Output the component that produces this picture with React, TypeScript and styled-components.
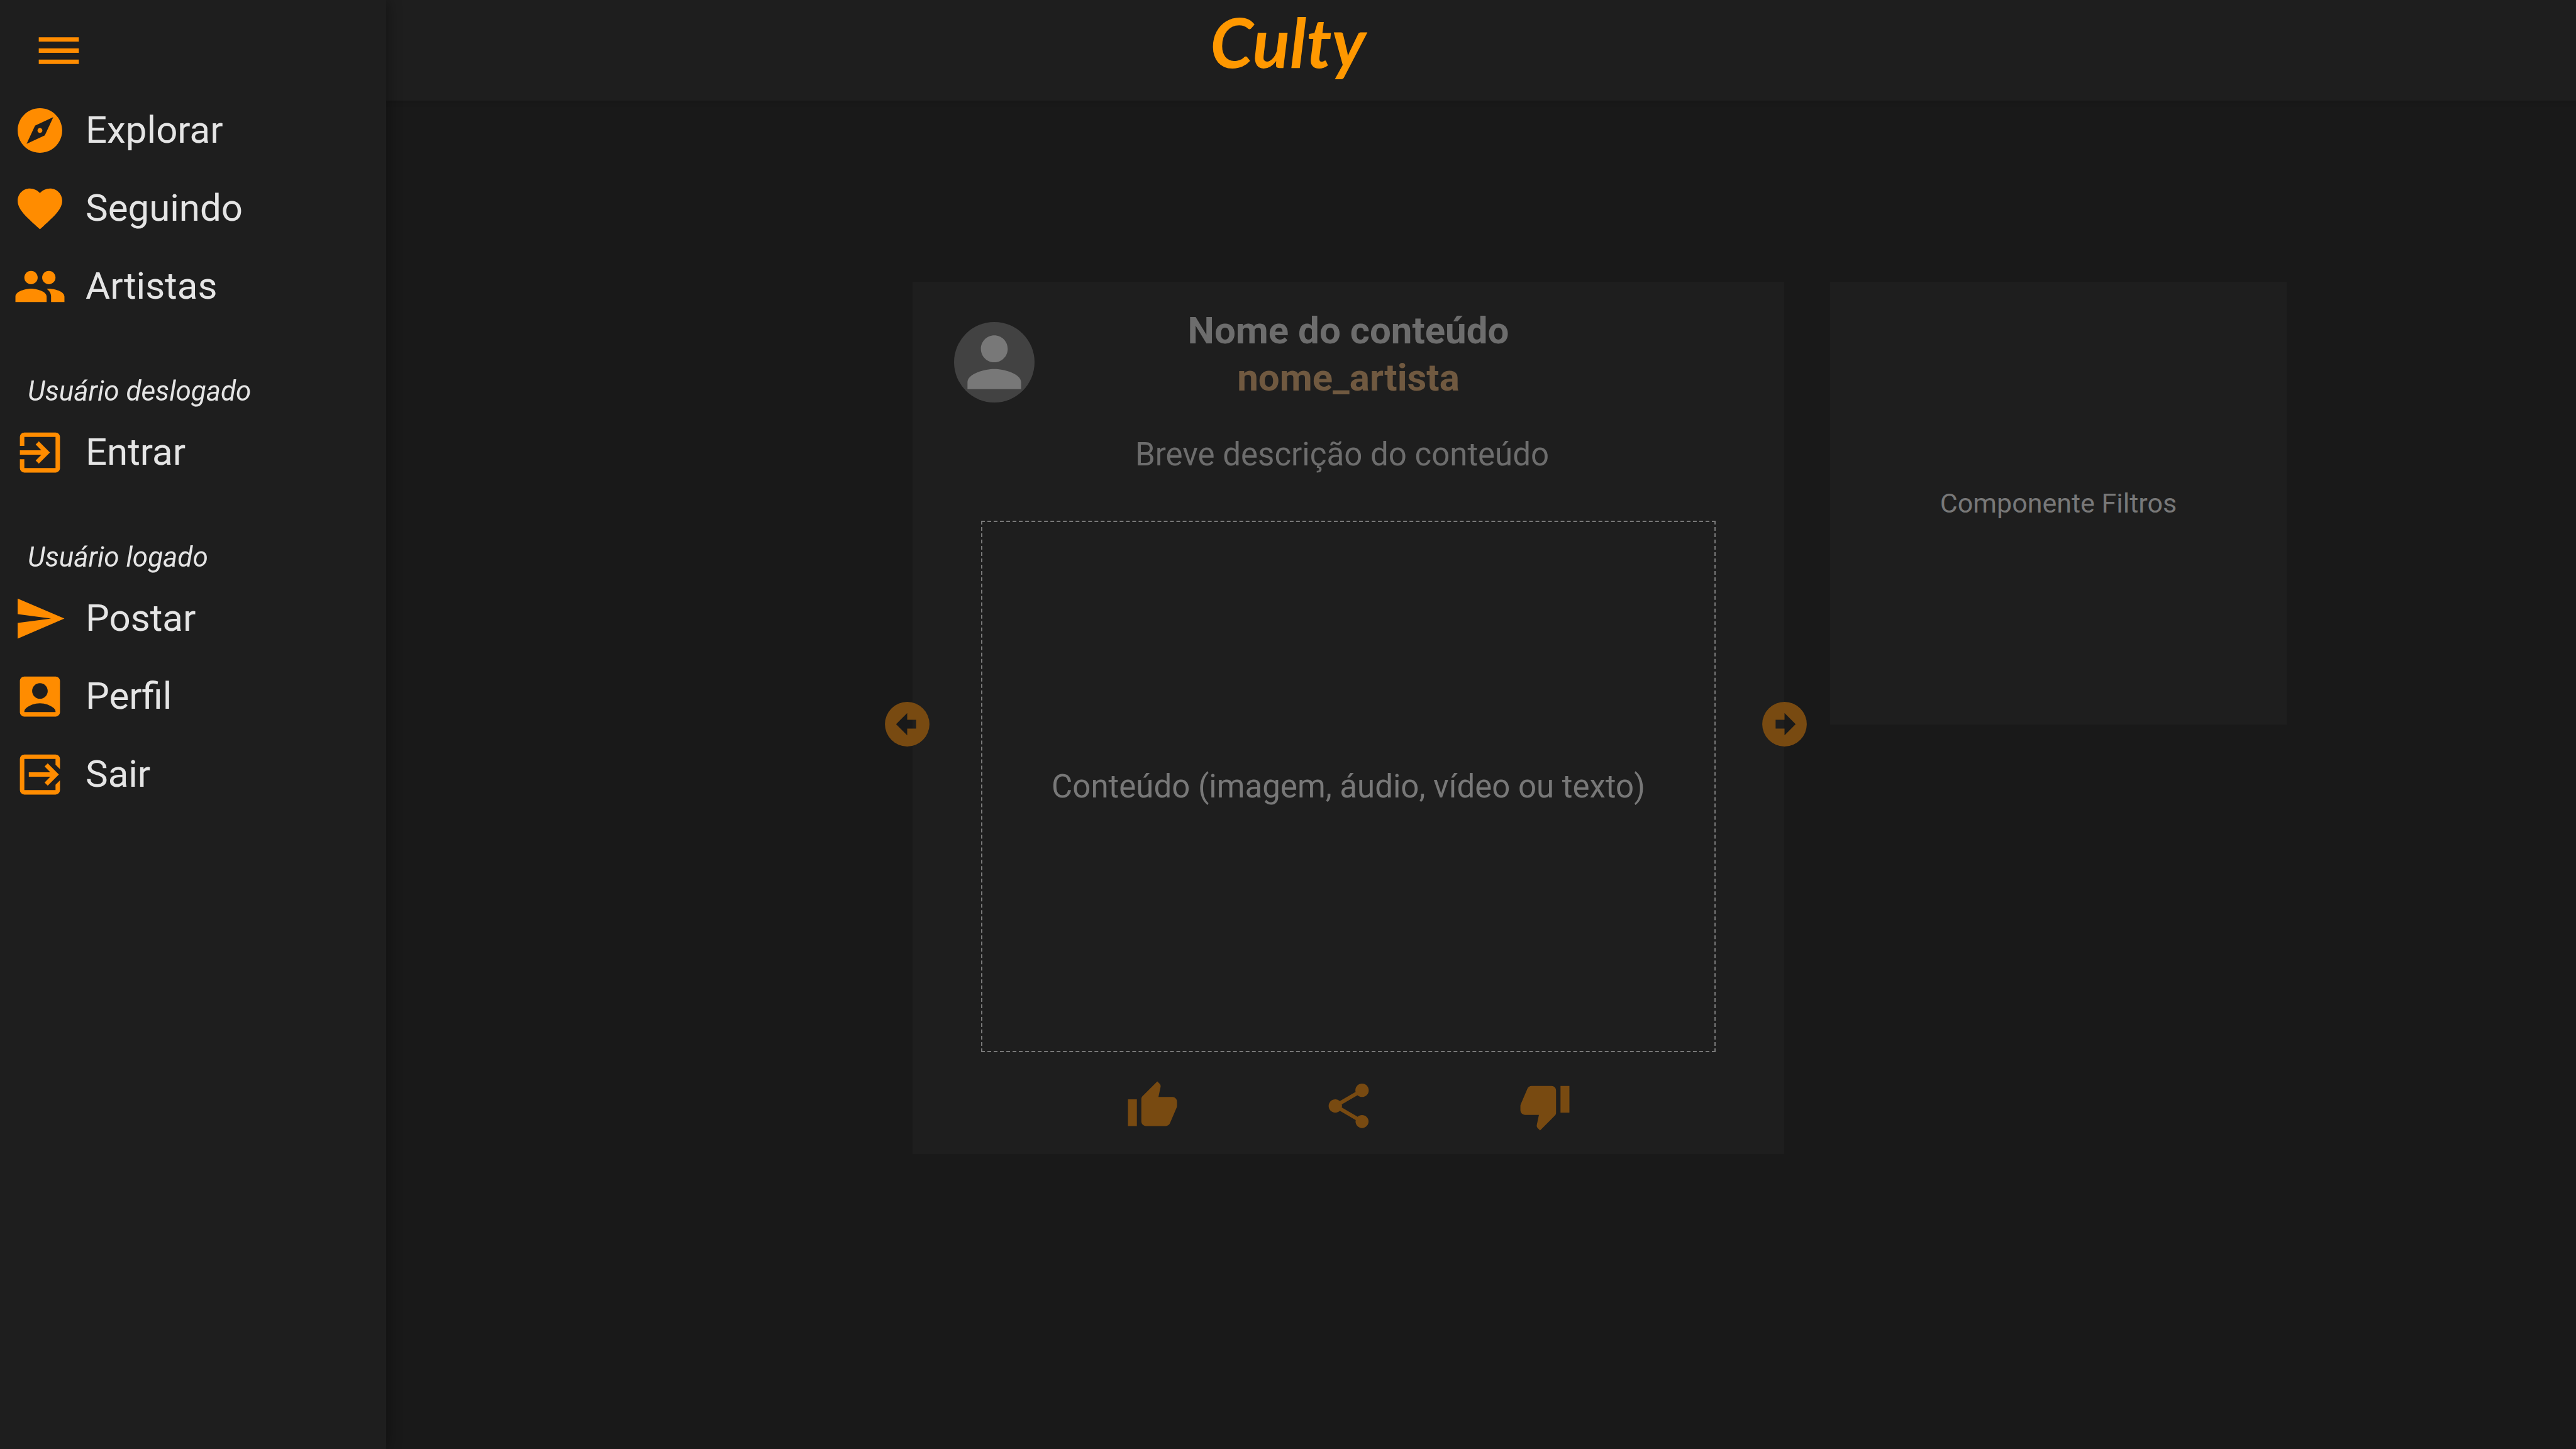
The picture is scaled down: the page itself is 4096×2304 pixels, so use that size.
import React from "react";
import styled, { createGlobalStyle, css } from "styled-components";
import {
  MdAccountBox,
  MdExitToApp,
  MdExplore,
  MdFavorite,
  MdMenu,
  MdPeople,
  MdPerson,
  MdShare,
} from "react-icons/md";

const color = {
  page: "#191919",
  surface: "#1e1e1e",
  accent: "#ff8c00",
  logo: "#ff9800",
  accentDim: "#784a11",
  text: "#e5e5e5",
  textDim: "#6d6d6d",
  artist: "#705940",
  placeholder: "#787878",
  avatar: "#424242",
};

const GlobalStyle = createGlobalStyle`
  *, *::before, *::after { box-sizing: border-box; }
  html { background: ${color.page}; }
  body {
    margin: 0;
    background: ${color.page};
    color: ${color.text};
    font-family: Roboto, "Liberation Sans", sans-serif;
  }
  h1, h2, p, ul { margin: 0; padding: 0; }
`;

const Page = styled.div`
  min-height: 100vh;
`;

const Header = styled.header`
  display: flex;
  align-items: flex-start;
  justify-content: center;
  height: 160px;
  background: ${color.surface};
  box-shadow: 0 2px 8px rgba(0, 0, 0, 0.12);
`;

const Logo = styled.a`
  color: ${color.logo};
  font-family: Lato, "Liberation Sans", sans-serif;
  font-size: 110px;
  font-style: italic;
  font-weight: 700;
  line-height: 130px;
  text-decoration: none;
`;

const Drawer = styled.aside`
  position: fixed;
  inset: 0 auto 0 0;
  width: 15%;
  background: ${color.surface};
  box-shadow: 4px 0 20px rgba(0, 0, 0, 0.3);
`;

const buttonReset = css`
  display: flex;
  padding: 0;
  border: 0;
  background: none;
  cursor: pointer;
`;

const MenuButton = styled.button`
  ${buttonReset}
  margin: 38px 0 22px 51px;
  color: ${color.accent};
  font-size: 85px;
`;

const NavList = styled.ul`
  list-style: none;
`;

const NavLink = styled.a`
  display: flex;
  align-items: center;
  gap: 30px;
  height: 124px;
  padding-left: 21px;
  color: ${color.text};
  font-size: 60px;
  line-height: 70px;
  text-decoration: none;

  svg {
    flex: none;
    width: 85px;
    height: 85px;
    color: ${color.accent};
  }
`;

const NavCaption = styled.p`
  padding: 80px 44px 10px;
  font-size: 44px;
  font-style: italic;
  line-height: 50px;
`;

const Content = styled.main`
  display: grid;
  grid-template-columns: 1378fr 1386fr 726fr 387fr;
  align-items: start;
  column-gap: 73px;
  padding-top: 288px;
`;

const Card = styled.article`
  position: relative;
  grid-column: 2;
  padding: 64px 109px 34px;
  background: ${color.surface};
`;

const CardHeader = styled.header`
  display: grid;
  grid-template-columns: 128px 1fr 128px;
  margin: 0 -43px;
`;

const Avatar = styled.div`
  display: flex;
  height: 128px;
  border-radius: 50%;
  background: ${color.avatar};
  color: ${color.placeholder};
  font-size: 128px;
`;

const Heading = styled.div`
  margin-top: -24px;
  text-align: center;
  font-size: 60px;
  line-height: 75px;
`;

const Title = styled.h1`
  color: ${color.textDim};
  font-size: inherit;
`;

const Artist = styled.a`
  color: ${color.artist};
  font-weight: 700;
  text-decoration: none;
`;

const Description = styled.p`
  margin: 53px 20px 75px 0;
  color: ${color.textDim};
  font-size: 51px;
  line-height: 60px;
  text-align: center;
`;

const Media = styled.div`
  display: flex;
  align-items: center;
  justify-content: center;
  aspect-ratio: 1168 / 845;
  border: 2px dashed ${color.placeholder};
  color: ${color.placeholder};
  font-size: 51px;
  line-height: 60px;
`;

const Actions = styled.div`
  display: flex;
  justify-content: center;
  gap: 227px;
  margin-top: 43px;
`;

const ActionButton = styled.button`
  ${buttonReset}
  color: ${color.accentDim};
  font-size: 85px;
`;

const ArrowButton = styled(ActionButton)<{ $side: "left" | "right" }>`
  position: absolute;
  top: 661px;
  ${({ $side }) => ($side === "left" ? "left: -51px;" : "right: -43px;")}
`;

const Filters = styled.section`
  display: flex;
  align-items: center;
  justify-content: center;
  aspect-ratio: 726 / 704;
  background: ${color.surface};
  color: ${color.placeholder};
  font-size: 43px;
  line-height: 50px;
`;

const Icon = ({ d }: { d: string }) => (
  <svg viewBox="0 0 24 24" width="1em" height="1em" fill="currentColor" aria-hidden="true">
    <path d={d} />
  </svg>
);

const paths = {
  send: "M2 21l21-9L2 3v7l15 2-15 2z",
  leave:
    "M19 3H5a2 2 0 0 0-2 2v14a2 2 0 0 0 2 2h14a2 2 0 0 0 2-2v-4.4l-2 2V19H5V5h14v2.6l2 2V5a2 2 0 0 0-2-2zM15.5 7l-1.42 1.41L16.67 11H7v2h9.67l-2.59 2.59L15.5 17l5-5z",
  thumbUp:
    "M23 10a2 2 0 0 0-2-2h-6.32l.96-4.57c.02-.1.03-.21.03-.32 0-.41-.17-.79-.44-1.06L14.17 1 7.59 7.58C7.22 7.95 7 8.45 7 9v10a2 2 0 0 0 2 2h9c.83 0 1.54-.5 1.84-1.22l3.02-7.05c.09-.23.14-.47.14-.73v-2zM1 21h4V9H1v12z",
  thumbDown:
    "M19 15h4V3h-4m-4 0H6c-.83 0-1.54.5-1.84 1.22l-3.02 7.05c-.09.23-.14.47-.14.73v2a2 2 0 0 0 2 2h6.31l-.95 4.57c-.02.1-.03.2-.03.31 0 .42.17.79.44 1.06L9.83 23l6.58-6.59c.37-.36.59-.86.59-1.41V5a2 2 0 0 0-2-2z",
  arrowLeft:
    "M12 2a10 10 0 1 1 0 20 10 10 0 0 1 0-20zM7 12l5 5v-3h4v-4h-4V7l-5 5z",
  arrowRight:
    "M12 22a10 10 0 1 1 0-20 10 10 0 0 1 0 20zM17 12l-5-5v3H8v4h4v3l5-5z",
};

type Entry = { label: string; icon: React.ReactNode };

const browse: Entry[] = [
  { label: "Explorar", icon: <MdExplore /> },
  { label: "Seguindo", icon: <MdFavorite /> },
  { label: "Artistas", icon: <MdPeople /> },
];

const loggedOut: Entry[] = [{ label: "Entrar", icon: <MdExitToApp /> }];

const loggedIn: Entry[] = [
  { label: "Postar", icon: <Icon d={paths.send} /> },
  { label: "Perfil", icon: <MdAccountBox /> },
  { label: "Sair", icon: <Icon d={paths.leave} /> },
];

const Nav = ({ entries }: { entries: Entry[] }) => (
  <NavList>
    {entries.map(({ label, icon }) => (
      <li key={label}>
        <NavLink href="#">
          {icon}
          {label}
        </NavLink>
      </li>
    ))}
  </NavList>
);

export default function App() {
  return (
    <Page>
      <GlobalStyle />
      <Header>
        <Logo href="#">Culty</Logo>
      </Header>
      <Content>
        <Card>
          <CardHeader>
            <Avatar>
              <MdPerson />
            </Avatar>
            <Heading>
              <Title>Nome do conteúdo</Title>
              <Artist href="#">nome_artista</Artist>
            </Heading>
          </CardHeader>
          <Description>Breve descrição do conteúdo</Description>
          <Media>Conteúdo (imagem, áudio, vídeo ou texto)</Media>
          <Actions>
            <ActionButton aria-label="Gostei">
              <Icon d={paths.thumbUp} />
            </ActionButton>
            <ActionButton aria-label="Compartilhar">
              <MdShare />
            </ActionButton>
            <ActionButton aria-label="Não gostei">
              <Icon d={paths.thumbDown} />
            </ActionButton>
          </Actions>
          <ArrowButton $side="left" aria-label="Anterior">
            <Icon d={paths.arrowLeft} />
          </ArrowButton>
          <ArrowButton $side="right" aria-label="Próximo">
            <Icon d={paths.arrowRight} />
          </ArrowButton>
        </Card>
        <Filters>Componente Filtros</Filters>
      </Content>
      <Drawer>
        <MenuButton aria-label="Menu">
          <MdMenu />
        </MenuButton>
        <nav>
          <Nav entries={browse} />
          <NavCaption>Usuário deslogado</NavCaption>
          <Nav entries={loggedOut} />
          <NavCaption>Usuário logado</NavCaption>
          <Nav entries={loggedIn} />
        </nav>
      </Drawer>
    </Page>
  );
}
